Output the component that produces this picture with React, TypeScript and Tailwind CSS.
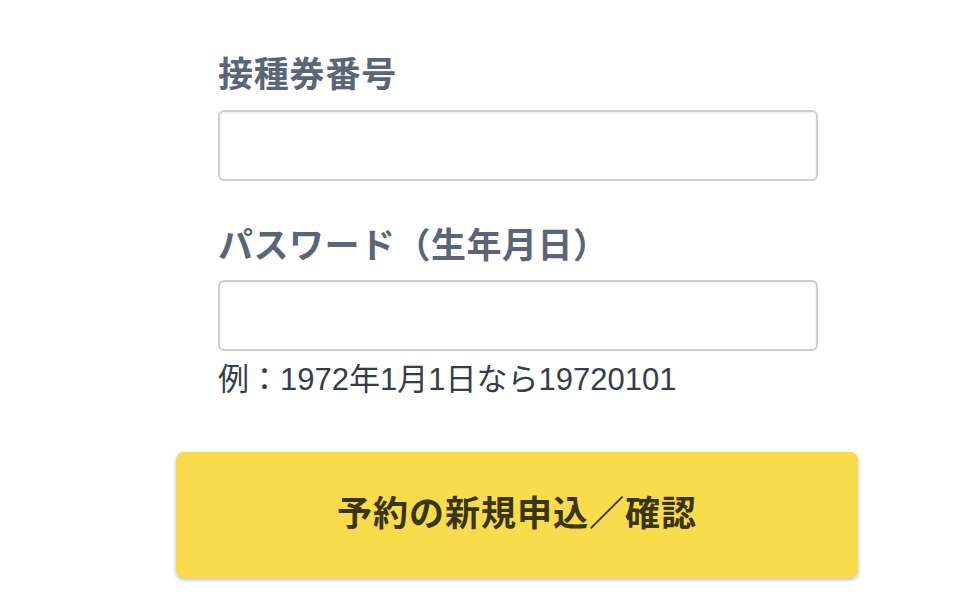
import React from 'react';

export default function App() {
  return (
    <div
      className="w-[954px] h-[616px] bg-white overflow-hidden"
      style={{ fontFamily: '"Noto Sans CJK JP", "Noto Sans", sans-serif' }}
    >
      <div className="pt-[52px] pl-[176px] w-[858px]">
        <div className="pl-[42px] w-[642px]">
          <label className="block text-[35px] leading-[40px] font-bold text-[#5a6577] tracking-[0.8px]">接種券番号</label>
          <input
            type="text"
            className="block mt-[18px] w-[600px] h-[71px] rounded-[6px] border-2 border-[#cfcfcf] bg-white shadow-[inset_0_1px_3px_rgba(0,0,0,0.08)] outline-none"
          />
          <label className="block mt-[42px] text-[35px] leading-[40px] font-bold text-[#5a6577] tracking-[0.5px]">
            パスワード（生年月日）
          </label>
          <input
            type="password"
            className="block mt-[17px] w-[600px] h-[71px] rounded-[6px] border-2 border-[#cfcfcf] bg-white shadow-[inset_0_1px_3px_rgba(0,0,0,0.08)] outline-none"
          />
          <p
            className="mt-[11px] text-[31px] leading-[36px] text-[#343e4b]"
            style={{ fontFamily: '"Liberation Sans", "Noto Sans CJK JP", sans-serif' }}
          >
            例：1972年1月1日なら19720101
          </p>
        </div>
        <button className="mt-[54px] w-[682px] h-[126px] pb-[8px] rounded-[8px] bg-[#f8dc4b] shadow-[0_2px_4px_rgba(0,0,0,0.25)] flex items-center justify-center text-[35px] font-bold text-[#3b3411] tracking-[1px]">
          予約の新規申込／確認
        </button>
      </div>
    </div>
  );
}
